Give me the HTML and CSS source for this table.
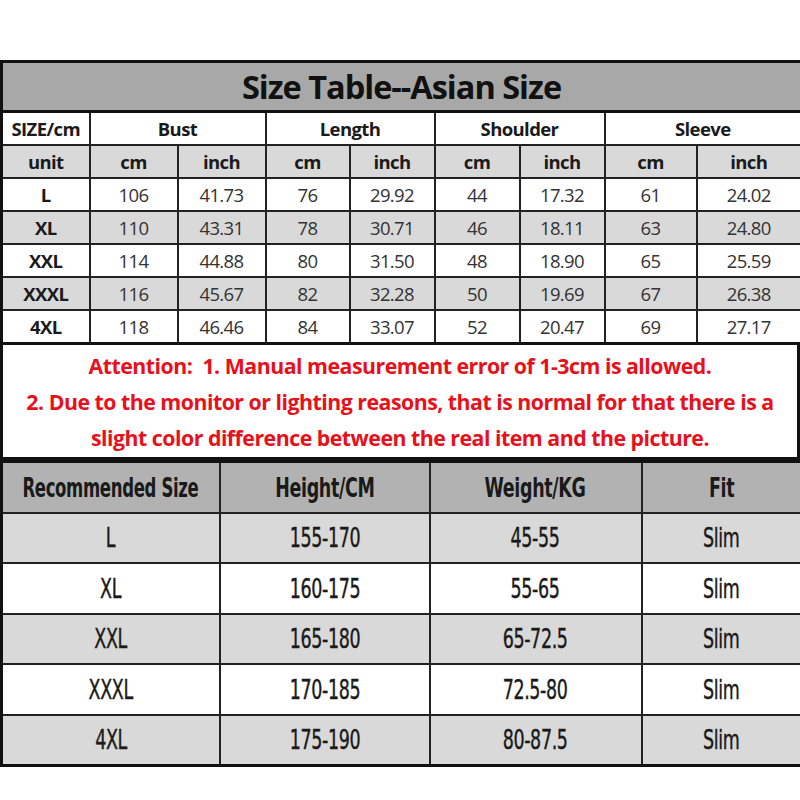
FILE: index.html
```html
<!DOCTYPE html>
<html>
<head>
<meta charset="utf-8">
<link rel="stylesheet" href="styles.css">
</head>
<body>
<div class="page">
  <table class="size-table">
    <colgroup>
      <col class="c0"><col class="c1"><col class="c2"><col class="c3"><col class="c4"><col class="c5"><col class="c6"><col class="c7"><col class="c8">
    </colgroup>
    <tr class="title-row"><th colspan="9">Size Table--Asian Size</th></tr>
    <tr class="head-row"><th>SIZE/cm</th><th colspan="2">Bust</th><th colspan="2">Length</th><th colspan="2">Shoulder</th><th colspan="2">Sleeve</th></tr>
    <tr class="unit-row"><th>unit</th><th>cm</th><th>inch</th><th>cm</th><th>inch</th><th>cm</th><th>inch</th><th>cm</th><th>inch</th></tr>
    <tr class="row-w"><th>L</th><td>106</td><td>41.73</td><td>76</td><td>29.92</td><td>44</td><td>17.32</td><td>61</td><td>24.02</td></tr>
    <tr class="row-g"><th>XL</th><td>110</td><td>43.31</td><td>78</td><td>30.71</td><td>46</td><td>18.11</td><td>63</td><td>24.80</td></tr>
    <tr class="row-w"><th>XXL</th><td>114</td><td>44.88</td><td>80</td><td>31.50</td><td>48</td><td>18.90</td><td>65</td><td>25.59</td></tr>
    <tr class="row-g"><th>XXXL</th><td>116</td><td>45.67</td><td>82</td><td>32.28</td><td>50</td><td>19.69</td><td>67</td><td>26.38</td></tr>
    <tr class="row-w"><th>4XL</th><td>118</td><td>46.46</td><td>84</td><td>33.07</td><td>52</td><td>20.47</td><td>69</td><td>27.17</td></tr>
  </table>
  <div class="attention">
    <p>Attention:&nbsp; 1. Manual measurement error of 1-3cm is allowed.</p>
    <p>2. Due to the monitor or lighting reasons, that is normal for that there is a</p>
    <p>slight color difference between the real item and the picture.</p>
  </div>
  <table class="rec-table">
    <colgroup><col class="r0"><col class="r1"><col class="r2"><col class="r3"></colgroup>
    <tr class="rec-head"><th><span class="cond b narrow">Recommended Size</span></th><th><span class="cond b">Height/CM</span></th><th><span class="cond b">Weight/KG</span></th><th><span class="cond b">Fit</span></th></tr>
    <tr class="row-g"><td><span class="cond">L</span></td><td><span class="cond">155-170</span></td><td><span class="cond">45-55</span></td><td><span class="cond">Slim</span></td></tr>
    <tr class="row-w"><td><span class="cond">XL</span></td><td><span class="cond">160-175</span></td><td><span class="cond">55-65</span></td><td><span class="cond">Slim</span></td></tr>
    <tr class="row-g"><td><span class="cond">XXL</span></td><td><span class="cond">165-180</span></td><td><span class="cond">65-72.5</span></td><td><span class="cond">Slim</span></td></tr>
    <tr class="row-w"><td><span class="cond">XXXL</span></td><td><span class="cond">170-185</span></td><td><span class="cond">72.5-80</span></td><td><span class="cond">Slim</span></td></tr>
    <tr class="row-g"><td><span class="cond">4XL</span></td><td><span class="cond">175-190</span></td><td><span class="cond">80-87.5</span></td><td><span class="cond">Slim</span></td></tr>
  </table>
</div>
</body>
</html>
```

FILE: styles.css
```css
html, body {
  margin: 0;
  padding: 0;
  background: #fff;
}
.page {
  padding-top: 60px;
  width: 800px;
  font-family: "Open Sans", "Liberation Sans", sans-serif;
  color: #222;
}
table {
  border-collapse: collapse;
  table-layout: fixed;
  width: 800px;
}
.size-table {
  border: 3px solid #111;
}
.size-table th, .size-table td {
  border: 2px solid #222;
  text-align: center;
  padding: 0;
  height: 31px;
  font-size: 18.5px;
  letter-spacing: -0.6px;
}
.size-table th {
  font-weight: 700;
  color: #1a1a1a;
}
.size-table td {
  font-weight: 400;
  color: #333;
}
.c0 { width: 88px; }
.c1 { width: 88px; }
.c2 { width: 88px; }
.c3 { width: 84px; }
.c4 { width: 85px; }
.c5 { width: 85px; }
.c6 { width: 85px; }
.c7 { width: 92px; }
.c8 { width: 105px; }
.size-table .title-row th {
  background: #a8a8a8;
  height: 47px;
  font-size: 32.5px;
  letter-spacing: -1px;
  color: #111;
  border-bottom: 3px solid #111;
}
.head-row th { background: #fff; }
.unit-row th { background: #d9d9d9; }
.row-w th, .row-w td { background: #fff; }
.row-g th, .row-g td { background: #d9d9d9; }
.attention {
  border: 3px solid #111;
  border-top: none;
  height: 115px;
  box-sizing: border-box;
  padding-top: 3px;
  text-align: center;
  color: #e8101a;
  font-weight: 700;
  font-size: 21.3px;
  letter-spacing: -0.5px;
}
.attention p {
  margin: 0;
  height: 36px;
  line-height: 36px;
  white-space: nowrap;
}
.rec-table {
  border: 3px solid #111;
}
.r0 { width: 218px; }
.r1 { width: 210px; }
.r2 { width: 212px; }
.r3 { width: 160px; }
.rec-table th, .rec-table td {
  border: 2px solid #222;
  height: 48.5px;
  padding: 0;
  text-align: center;
  white-space: nowrap;
  font-family: "DejaVu Sans Condensed", "DejaVu Sans", sans-serif;
  font-size: 27px;
  color: #1a1a1a;
}
.rec-head th { background: #b2b2b2; }
.rec-table td {
  font-weight: 400;
  -webkit-text-stroke: 0.4px #1a1a1a;
}
.cond {
  display: inline-block;
  margin: 0 -60px;
  transform: scaleX(0.72);
  letter-spacing: -0.5px;
}
.cond.b { font-weight: 700; }
.cond.narrow { transform: scaleX(0.68); }
```
